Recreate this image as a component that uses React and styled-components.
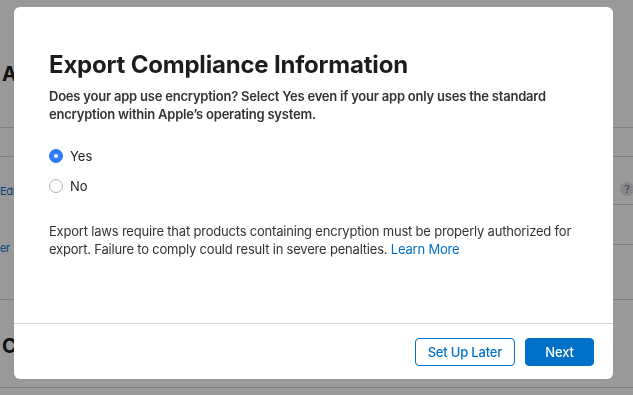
import React, { useState } from "react";
import styled, { createGlobalStyle } from "styled-components";

const Colors = {
  Text: "#1d1d1f",
  Body: "#333336",
  Blue: "#0070c9",
  Radio: "#2f7bf5",
  Line: "#d2d2d7",
  Muted: "#86868b",
};

const GlobalStyle = createGlobalStyle`
  html, body {
    margin: 0;
    padding: 0;
  }
  body {
    font-family: Inter, "Noto Sans", "Liberation Sans", sans-serif;
    color: ${Colors.Text};
    -webkit-font-smoothing: antialiased;
  }
`;

/* page underneath the dialog */
const Page = styled.div`
  width: 633px;
  height: 395px;
  overflow: hidden;
  background: #fff;
`;

const PageHeader = styled.div`
  height: 128px;
  padding: 60px 0 0 2px;
  box-sizing: border-box;
  border-bottom: 1px solid ${Colors.Line};
`;

const PageTitle = styled.h1`
  margin: 0;
  font-size: 20px;
  line-height: 28px;
  font-weight: 700;
  white-space: nowrap;
`;

const Band = styled.div`
  height: 28px;
  border-bottom: 1px solid ${Colors.Line};
`;

const InfoGrid = styled.div`
  display: grid;
  grid-template-columns: 1fr 40px;
  height: 142px;
  border-bottom: 1px solid ${Colors.Line};
`;

const LinkColumn = styled.div`
  display: flex;
  flex-direction: column;
  padding-top: 25px;
  row-gap: 39px;
`;

const PageLink = styled.a`
  font-size: 11px;
  line-height: 18px;
  letter-spacing: -0.3px;
  color: ${Colors.Blue};
  white-space: nowrap;
`;

const SideTable = styled.div`
  display: grid;
  grid-template-rows: 47px 40px 1fr;
`;

const SideRow = styled.div`
  display: flex;
  align-items: flex-end;
  justify-content: flex-end;
  padding-bottom: 8px;
  & + & {
    border-top: 1px solid ${Colors.Line};
  }
`;

const HelpDot = styled.span`
  width: 14px;
  height: 14px;
  margin-right: -1px;
  border-radius: 50%;
  background: #e3e3e8;
  color: #6e6e73;
  font-size: 11px;
  line-height: 14px;
  text-align: center;
`;

const PageSection = styled.div`
  height: 88px;
  padding: 32px 0 0 2px;
  box-sizing: border-box;
  border-bottom: 1px solid ${Colors.Line};
`;

/* dialog */
const Backdrop = styled.div`
  position: fixed;
  inset: 0;
  display: flex;
  padding: 7px 20px 16px 14px;
  background: rgba(0, 0, 0, 0.4);
`;

const Dialog = styled.div`
  flex: 1;
  display: flex;
  flex-direction: column;
  background: #fff;
  border-radius: 6px;
  overflow: hidden;
`;

const DialogBody = styled.div`
  flex: 1;
  padding: 43px 35px 0 35px;
`;

const Title = styled.h2`
  margin: 0;
  font-size: 24px;
  line-height: 29px;
  font-weight: 700;
  letter-spacing: -0.2px;
  color: ${Colors.Text};
`;

const Question = styled.p`
  margin: 8px 0 0 0;
  font-size: 13px;
  line-height: 18px;
  font-weight: 600;
  letter-spacing: -0.22px;
  color: ${Colors.Body};
`;

const Options = styled.div`
  display: flex;
  flex-direction: column;
  row-gap: 10px;
  margin-top: 23px;
`;

const Option = styled.label`
  display: flex;
  align-items: center;
  column-gap: 7px;
  height: 20px;
  font-size: 13px;
  color: ${Colors.Text};
  cursor: pointer;
`;

const RadioMark = styled.span`
  box-sizing: border-box;
  width: 14px;
  height: 14px;
  border-radius: 50%;
  display: flex;
  align-items: center;
  justify-content: center;
  background: ${(p) => (p.$checked ? Colors.Radio : "#fff")};
  border: 1px solid ${(p) => (p.$checked ? Colors.Radio : "#b4b4b9")};
  &::after {
    content: "";
    width: 4px;
    height: 4px;
    border-radius: 50%;
    background: #fff;
    display: ${(p) => (p.$checked ? "block" : "none")};
  }
`;

const Notice = styled.p`
  margin: 26px 0 0 0;
  font-size: 13px;
  line-height: 18px;
  letter-spacing: -0.2px;
  color: ${Colors.Body};
`;

const LearnMore = styled.a`
  color: ${Colors.Blue};
  text-decoration: none;
  cursor: pointer;
`;

const Footer = styled.div`
  height: 56px;
  border-top: 1px solid ${Colors.Line};
  display: flex;
  align-items: center;
  justify-content: flex-end;
  column-gap: 10px;
  padding: 0 19px 0 0;
  box-sizing: border-box;
`;

const Button = styled.button`
  height: 28px;
  min-width: 69px;
  padding: 0 12px;
  border-radius: 4px;
  font-family: inherit;
  font-size: 13px;
  font-weight: 500;
  letter-spacing: -0.2px;
  cursor: pointer;
  border: 1px solid ${Colors.Blue};
  color: ${(p) => (p.$primary ? "#fff" : Colors.Blue)};
  background: ${(p) => (p.$primary ? Colors.Blue : "#fff")};
`;

export default function App() {
  const [choice, setChoice] = useState("yes");

  return (
    <>
      <GlobalStyle />
      <Page>
        <PageHeader>
          <PageTitle>App Information</PageTitle>
        </PageHeader>
        <Band />
        <InfoGrid>
          <LinkColumn>
            <PageLink>Edit</PageLink>
            <PageLink>er</PageLink>
          </LinkColumn>
          <SideTable>
            <SideRow>
              <HelpDot>?</HelpDot>
            </SideRow>
            <SideRow />
            <SideRow />
          </SideTable>
        </InfoGrid>
        <PageSection>
          <PageTitle>Compliance</PageTitle>
        </PageSection>
      </Page>

      <Backdrop>
        <Dialog>
          <DialogBody>
            <Title>Export Compliance Information</Title>
            <Question>
              Does your app use encryption? Select Yes even if your app only
              uses the standard encryption within Apple’s operating system.
            </Question>
            <Options>
              <Option onClick={() => setChoice("yes")}>
                <RadioMark $checked={choice === "yes"} />
                Yes
              </Option>
              <Option onClick={() => setChoice("no")}>
                <RadioMark $checked={choice === "no"} />
                No
              </Option>
            </Options>
            <Notice>
              Export laws require that products containing encryption must be
              properly authorized for export. Failure to comply could result in
              severe penalties. <LearnMore>Learn More</LearnMore>
            </Notice>
          </DialogBody>
          <Footer>
            <Button>Set Up Later</Button>
            <Button $primary>Next</Button>
          </Footer>
        </Dialog>
      </Backdrop>
    </>
  );
}
